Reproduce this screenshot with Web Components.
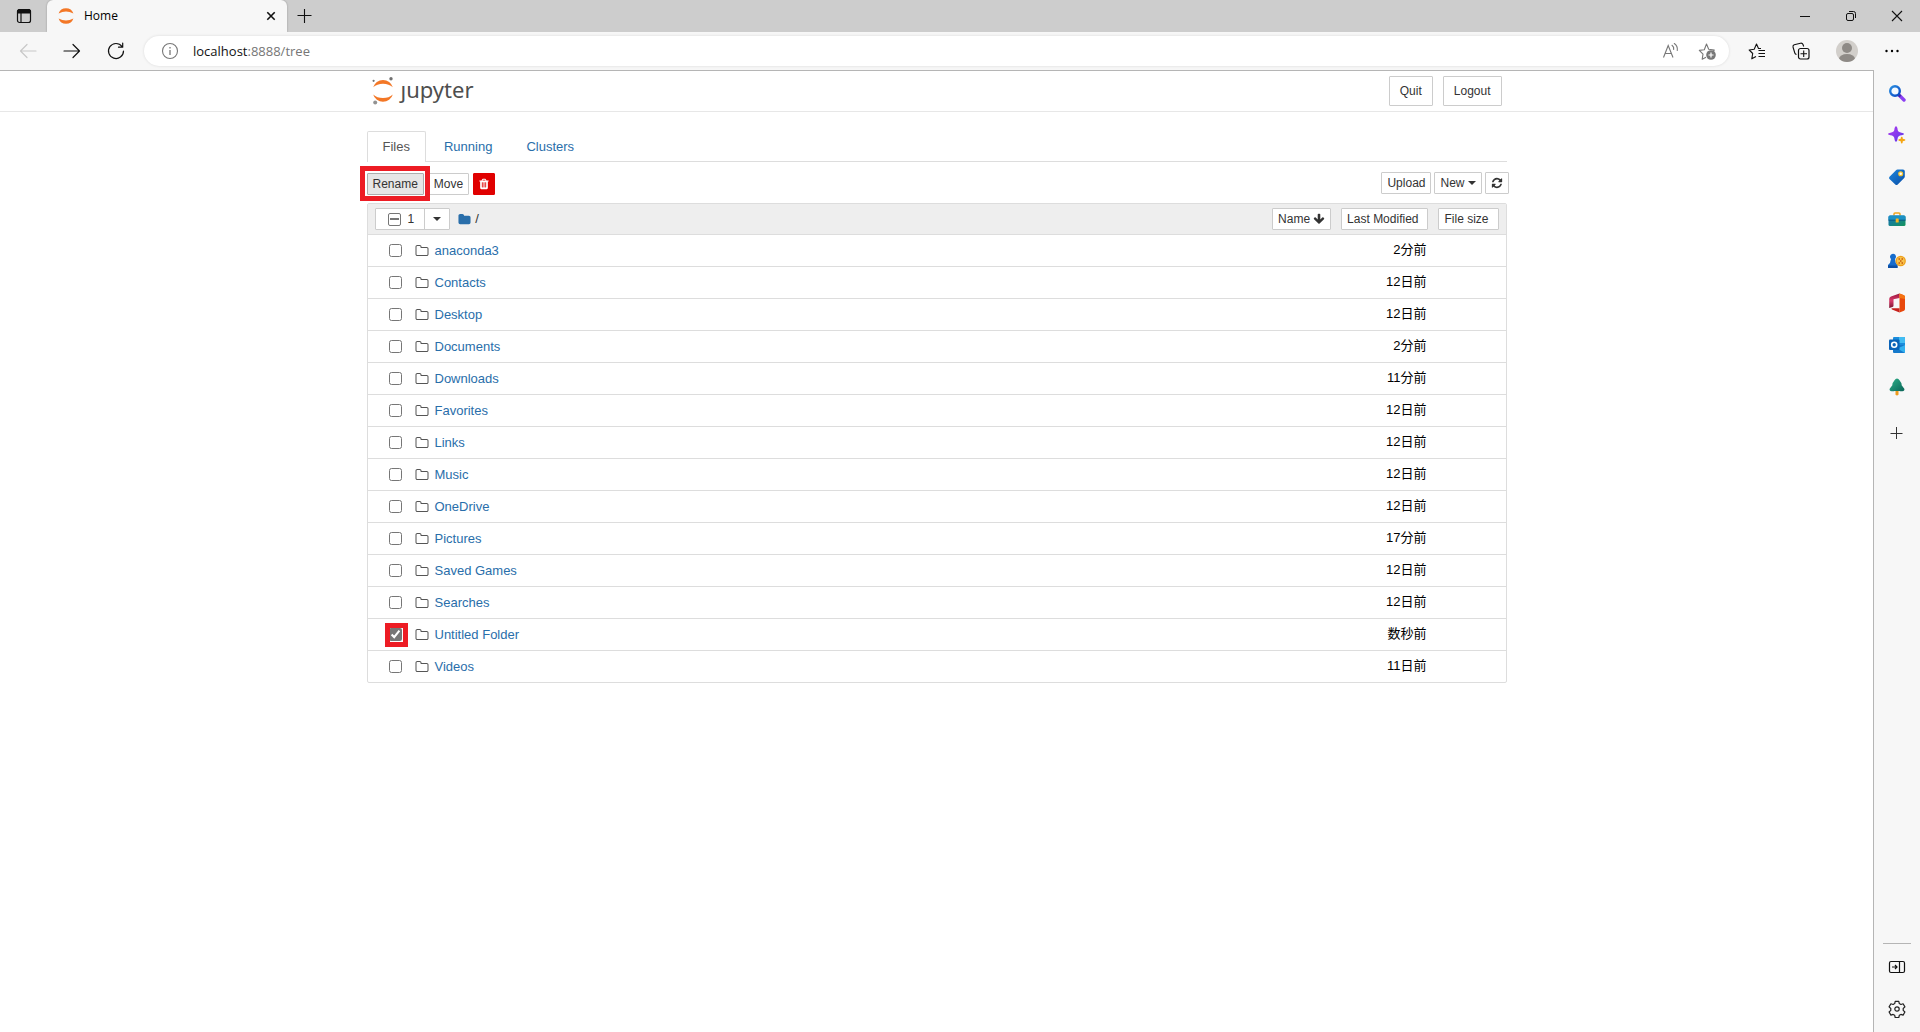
<!DOCTYPE html>
<html lang="ja">
<head>
<meta charset="utf-8">
<title>Home</title>
<style>
html, body { margin: 0; height: 100%; background: #fff; }
body { font-family: "Liberation Sans", "Noto Sans CJK JP", sans-serif; font-size: 13px; line-height: 20px; color: #000; }
</style>
</head>
<body>
<browser-window>
  <tab-strip slot="tabs"></tab-strip>
  <address-bar slot="address"></address-bar>
  <notebook-header></notebook-header>
  <file-browser></file-browser>
  <edge-sidebar slot="side"></edge-sidebar>
</browser-window>

<script>
const S = (w, h, vb, body, extra = '') =>
  `<svg width="${w}" height="${h}" viewBox="${vb}" aria-hidden="true" ${extra}>${body}</svg>`;
const line = 'fill="none" stroke="currentColor" stroke-width="1.2" stroke-linecap="round" stroke-linejoin="round"';

const ICONS = {
  workspaces: S(16, 16, '0 0 16 16', '<rect x="1.5" y="1.5" width="13" height="13" rx="2" fill="none" stroke="#111" stroke-width="1.2"/><path d="M1.5 5V3.3Q1.500 1.500 3.300 1.500H12.700Q14.500 1.500 14.500 3.300V5z" fill="#111" stroke="#111"/><path d="M5 5v9.500" stroke="#111" stroke-width="1.200"/>'),
  planet: S(16, 16, '0 0 16 16', '<path d="M.6 5.500A7.800 7.800 0 0 1 15.400 5.500Q8 1.300 .6 5.500zM.6 10.500A7.800 7.800 0 0 0 15.400 10.500Q8 14.700 .6 10.500z" fill="#f37726"/>'),
  closeTab: S(10, 10, '0 0 10 10', '<path d="M1.300 1.300l7.400 7.400M8.700 1.300l-7.400 7.400" stroke="#111" stroke-width="1.600"/>'),
  plus: S(16, 16, '0 0 16 16', '<path d="M7.500 1v14M.5 7.500h14" stroke="#111" stroke-width="1.100"/>'),
  plusThin: S(14, 14, '0 0 14 14', '<path d="M6.500 1v12M.5 7.500h12" stroke="#333" stroke-width="1"/>'),
  minimize: S(12, 12, '0 0 12 12', '<path d="M1 6.500h10" stroke="#111"/>'),
  restore: S(12, 12, '0 0 12 12', '<rect x="1.500" y="3.500" width="7" height="7" rx="1.500" fill="none" stroke="#111"/><path d="M4 1.500h4.500a2 2 0 0 1 2 2V8" fill="none" stroke="#111"/>'),
  close: S(12, 12, '0 0 12 12', '<path d="M1 1l10 10M11 1L1 11" stroke="#111" stroke-width="1.100"/>'),
  back: S(18, 18, '0 0 18 18', `<path d="M17 9H1.500M8 2.500L1.500 9 8 15.500" ${line}/>`),
  forward: S(18, 18, '0 0 18 18', `<path d="M1 9h15.500M10 2.500L16.500 9 10 15.500" ${line}/>`),
  reload: S(18, 18, '0 0 18 18', `<path d="M15 4.500A7.500 7.500 0 1 0 16.500 9M15.700 1v4.200h-4.200" ${line}/>`),
  info: S(18, 18, '0 0 18 18', '<circle cx="9" cy="9" r="7.500" fill="none" stroke="#777" stroke-width="1.100"/><path d="M9 8v5M9 5v1.400" stroke="#777" stroke-width="1.300"/>'),
  readAloud: S(18, 18, '0 0 18 18', '<path d="M1.500 15.500L6.200 3.500 11 15.500M3 11.500h6.500" fill="none" stroke="#777" stroke-width="1.100"/><path d="M10 3.300q2 1.500 1.700 4.200M12.300 1.500q3.600 2.600 3 7" fill="none" stroke="#777" stroke-width="1.100" stroke-linecap="round"/>'),
  starAdd: S(18, 18, '0 0 18 18', '<path d="M8 15.200l-3.800 2 .8-5L1.300 8.400l5-.7L8.500 2l2.200 5.200 5.600.8-2 2" fill="none" stroke="#777" stroke-width="1.100" stroke-linejoin="round"/><circle cx="13" cy="13" r="4.800" fill="#777"/><path d="M13 10.500v5M10.500 13h5" stroke="#fff" stroke-width="1.200"/>'),
  favorites: S(18, 18, '0 0 18 18', '<path d="M8 14.500l-4.200 2.300.9-5.300L1.200 8l5-.7L8.500 2l2 4.500h2.500" fill="none" stroke="#111" stroke-width="1.100" stroke-linejoin="round"/><path d="M10.500 8.500H17M10.500 11.500H17M10.500 14.500H17" stroke="#111" stroke-width="1.200"/>'),
  collections: S(18, 18, '0 0 18 18', '<rect x="6.500" y="6.500" width="10.500" height="10.500" rx="2" fill="none" stroke="#111" stroke-width="1.200"/><path d="M11.700 8.500v6.500M8.500 11.700H15M4.500 12.500Q3.200 12.300 2.800 11L1 5Q.700 3.300 2.200 2.700L8.500 1.200Q10.400 .900 11 2.500L11.700 4.500" fill="none" stroke="#111" stroke-width="1.100"/>'),
  profile: S(22, 22, '0 0 22 22', '<defs><clipPath id="c"><circle cx="11" cy="11" r="11"/></clipPath></defs><g clip-path="url(#c)"><rect width="22" height="22" fill="#d2cfcb"/><circle cx="11" cy="8" r="5" fill="#8e8a86"/><ellipse cx="11" cy="19" rx="8" ry="5" fill="#8e8a86"/></g>'),
  more: S(16, 16, '0 0 16 16', '<circle cx="2.500" cy="8" r="1.200"/><circle cx="8" cy="8" r="1.200"/><circle cx="13.500" cy="8" r="1.200"/>'),
  search: S(18, 18, '0 0 18 18', '<defs><linearGradient id="g" x2="1" y2="1"><stop stop-color="#2a8ee0"/><stop offset="1" stop-color="#0a47c4"/></linearGradient></defs><path d="M11 11l5 5" stroke="#8b3ff2" stroke-width="3.400" stroke-linecap="round"/><path d="M10.500 10.500l2 2" stroke="#4a2ba8" stroke-width="2.500"/><circle cx="7" cy="7" r="4.800" fill="#f4faff" stroke="url(#g)" stroke-width="2.400"/>'),
  sparkle: S(18, 18, '0 0 18 18', '<defs><linearGradient id="g" x2="1" y2="1"><stop stop-color="#b23cf0"/><stop offset="1" stop-color="#5a38e8"/></linearGradient></defs><path d="M8 .3Q9.300 .3 9.700 4 10 6.200 13.500 6.700 16 7.200 16 8 16 8.800 13.500 9.300 10 9.800 9.700 12 9.300 15.700 8 15.700 6.700 15.700 6.300 12 6 9.800 2.500 9.300 0 8.800 0 8 0 7.200 2.500 6.700 6 6.200 6.300 4 6.700 .3 8 .3z" fill="url(#g)"/><path d="M13.800 10.800q.9-.5 1 2 2.700.2 2.700 1.200t-2.700 1.200q-.1 2.600-1 2.400-1 .2-1.100-2.400Q10.200 15 10.200 14t2.500-1.200q.1-2.500 1.100-2z" fill="#f5a714"/>'),
  tag: S(18, 18, '0 0 18 18', '<defs><linearGradient id="g" x2="1" y2="1"><stop stop-color="#1c86dc"/><stop offset="1" stop-color="#0b4fa8"/></linearGradient></defs><path d="M8 2.200Q8.500 1.500 9.500 1.500H15Q16.800 1.500 16.800 3.300V8.500Q16.800 9.300 16.200 10L9.700 16.500Q8.500 17.500 7.300 16.500L1.500 11Q.500 10 1.500 8.800z" fill="url(#g)"/><circle cx="12.700" cy="5.700" r="1.900" fill="#fff" stroke="#f5c22e" stroke-width="1.300"/>'),
  toolbox: S(18, 18, '0 0 18 18', '<defs><linearGradient id="g" x2="1" y2="1"><stop stop-color="#156fc0"/><stop offset="1" stop-color="#15955a"/></linearGradient></defs><path d="M6 5.500V4q0-1 1-1h4q1 0 1 1v1.500" fill="none" stroke="#efa51f" stroke-width="1.500"/><rect x=".5" y="5.500" width="17" height="10.500" rx="1.500" fill="url(#g)"/><path d="M.5 7Q.500 5.500 2 5.500H16q1.500 0 1.500 1.500V10H.5z" fill="#1b90c4"/><path d="M.5 10.200h17" stroke="#0b5b80"/><rect x="7.700" y="8.500" width="3" height="4" rx=".6" fill="#f6b522"/>'),
  games: S(18, 18, '0 0 18 18', '<path d="M2 4.500a3 3 0 1 1 5 2.500Q7.200 11 9.500 13v3H0v-3Q2.700 11 3 7A3 3 0 0 1 2 4.500z" fill="#176ccc"/><path d="M0 13.500h9.500V16H0z" fill="#0d4ea3"/><circle cx="12.700" cy="9" r="5.200" fill="#efa01b"/><circle cx="12.700" cy="9" r="3.900" fill="#f8c34d"/><path d="M10.500 7h1.500M13.500 7H15M10.500 11h1.500M13.500 11H15M12 9h1.500" stroke="#c85b0a" stroke-width="1.300"/>'),
  office: S(18, 20, '0 0 18 20', '<defs><linearGradient id="g" x2="0" y2="1"><stop stop-color="#9b173e"/><stop offset=".5" stop-color="#d83b6b"/><stop offset="1" stop-color="#7a152e"/></linearGradient></defs><path d="M11.500 .5L3 3.400Q1.200 4 1.200 6v9L4.500 14Q5.500 13.500 5.500 12.500V6.300L11.500 5z" fill="url(#g)"/><path d="M11.500 .5L16 2.200Q17 2.700 17 4V16q0 1.300-1 1.700L11.500 19.500z" fill="#e8480c"/><path d="M11.500 5V.500L16 2.200Q17 2.700 17 4v2z" fill="#f57312"/><path d="M4 15.300h7.500v4.200L4 16.600q-1.200-.8 0-1.300z" fill="#c7201c"/>'),
  outlook: S(18, 18, '0 0 18 18', '<rect x="5" y="1" width="12" height="12" rx="1" fill="#1a8cdc"/><path d="M11 1h5q1 0 1 1v5h-6z" fill="#42bcf2"/><path d="M5 9h12v7q0 1-1 1H6q-1 0-1-1z" fill="#1579cb"/><path d="M17 9v8L9.500 12.500z" fill="#32b1ef"/><rect x="1" y="3.500" width="10.500" height="10.500" rx="1" fill="#0b63b8"/><circle cx="6.200" cy="8.700" r="2.500" fill="none" stroke="#fff" stroke-width="1.600"/>'),
  tree: S(18, 18, '0 0 18 18', '<defs><linearGradient id="g" x2="1" y2="1"><stop stop-color="#2fb18a"/><stop offset="1" stop-color="#0a6457"/></linearGradient></defs><path d="M7.500 11.500h3V16.800q-1.500 1.200-3 0z" fill="#ee9b1d"/><path d="M9 .5Q10.500 .5 11.500 2.300L13.300 5Q14 6.300 13.500 7L16.300 10.800Q17 12.300 15.500 13 13 13.500 11.300 13H6.700Q5 13.500 2.500 13 1 12.300 1.700 10.800L4.500 7Q4 6.300 4.700 5L6.500 2.300Q7.500 .5 9 .5z" fill="url(#g)"/>'),
  panel: S(18, 14, '0 0 18 14', '<rect x="1.500" y="1.500" width="15" height="11" rx="1.500" fill="none" stroke="#111" stroke-width="1.200"/><path d="M11.500 1.500v11M4 7h5M7 5l2 2-2 2" fill="none" stroke="#111" stroke-width="1.200"/>'),
  gear: S(18, 18, '0 0 18 18', '<path d="M7.200 1.300h3.600l.5 2.300 1.600.9 2.200-.7 1.800 3.100-1.700 1.600v1.900l1.700 1.600-1.800 3.100-2.200-.7-1.600.9-.5 2.200H7.200l-.5-2.200-1.600-.9-2.200.7-1.800-3.100 1.700-1.600V8.500L1.100 6.900l1.800-3.100 2.200.7 1.600-.9z" fill="none" stroke="#222" stroke-width="1.200" stroke-linejoin="round"/><circle cx="9" cy="9" r="2.200" fill="none" stroke="#222" stroke-width="1.200"/>'),
  jupyter: S(22, 30, '0 0 22 30', '<path d="M1.200 11.300A10.200 10.200 0 0 1 20.800 11.300Q17 7.800 11 7.800T1.200 11.300zM1.200 18.500A10.200 10.200 0 0 0 20.800 18.500Q17 22 11 22T1.200 18.500z" fill="#f37726"/><circle cx="19" cy="2.800" r="1.700" fill="#717171"/><circle cx="1.600" cy="4.800" r="1.100" fill="#717171"/><circle cx="3.200" cy="26.500" r="2" fill="#929292"/>'),
  trash: S(12, 12, '0 0 1792 1792', '<path fill="currentColor" d="M704 1376v-704q0-14-9-23t-23-9h-64q-14 0-23 9t-9 23v704q0 14 9 23t23 9h64q14 0 23-9t9-23zm256 0v-704q0-14-9-23t-23-9h-64q-14 0-23 9t-9 23v704q0 14 9 23t23 9h64q14 0 23-9t9-23zm256 0v-704q0-14-9-23t-23-9h-64q-14 0-23 9t-9 23v704q0 14 9 23t23 9h64q14 0 23-9t9-23zm-544-992h448l-48-117q-7-9-17-11h-317q-10 2-17 11zm928 32v64q0 14-9 23t-23 9h-96v948q0 83-47 143.500t-113 60.500h-832q-66 0-113-58.500t-47-141.500v-952h-96q-14 0-23-9t-9-23v-64q0-14 9-23t23-9h309l70-167q15-37 54-63t79-26h320q40 0 79 26t54 63l70 167h309q14 0 23 9t9 23z"/>'),
  refresh: S(12, 12, '0 0 1792 1792', '<path fill="currentColor" d="M1639 1056q0 5-1 7-64 268-268 434.500t-478 166.500q-146 0-282.500-55t-243.500-157l-129 129q-19 19-45 19t-45-19-19-45v-448q0-26 19-45t45-19h448q26 0 45 19t19 45-19 45l-137 137q71 66 161 102t187 36q134 0 250-65t186-179q11-17 53-117 8-23 30-23h192q13 0 22.500 9.500t9.500 22.500zm25-800v448q0 26-19 45t-45 19h-448q-26 0-45-19t-19-45 19-45l138-138q-148-137-349-137-134 0-250 65t-186 179q-11 17-53 117-8 23-30 23h-199q-13 0-22.500-9.500t-9.500-22.500v-7q65-268 270-434.500t480-166.500q146 0 284 55.500t245 156.500l130-129q19-19 45-19t45 19 19 45z"/>'),
  arrowDown: S(12, 12, '0 0 1792 1792', '<path fill="currentColor" d="M1675 832q0 53-37 90l-651 652q-39 37-91 37-53 0-90-37l-651-652q-38-36-38-90 0-53 38-91l74-75q39-37 91-37 53 0 90 37l294 294v-704q0-52 38-90t90-38h128q52 0 90 38t38 90v704l294-294q37-37 90-37 52 0 91 37l75 75q37 39 37 91z"/>'),
  folder: S(13, 13, '0 0 1792 1792', '<path fill="currentColor" d="M1728 608v704q0 92-66 158t-158 66h-1216q-92 0-158-66t-66-158v-960q0-92 66-158t158-66h320q92 0 158 66t66 158v32h672q92 0 158 66t66 158z"/>'),
  folderOpen: S(14, 14, '0 0 1792 1792', '<path fill="currentColor" d="M1600 1312v-704q0-40-28-68t-68-28h-704q-40 0-68-28t-28-68v-64q0-40-28-68t-68-28h-320q-40 0-68 28t-28 68v960q0 40 28 68t68 28h1216q40 0 68-28t28-68zm128-704v704q0 92-66 158t-158 66h-1216q-92 0-158-66t-66-158v-960q0-92 66-158t158-66h320q92 0 158 66t66 158v32h672q92 0 158 66t66 158z"/>'),
  caret: S(8, 4, '0 0 8 4', '<path d="M0 0h8L4 4z" fill="currentColor"/>')
};

const BASE = `
  * { box-sizing: border-box; }
  button { display: flex; align-items: center; justify-content: center; font: inherit; color: inherit; background: none; border: 0; padding: 0; margin: 0; }
  svg { display: block; flex: none; }
`;

function define(name, css, html, after) {
  customElements.define(name, class extends HTMLElement {
    connectedCallback() {
      if (this.shadowRoot) return;
      const root = this.attachShadow({ mode: 'open' });
      root.innerHTML = `<style>${BASE}${css}</style>` + (typeof html === 'function' ? html(this) : html);
      if (after) after(root, this);
    }
  });
}

define('ui-icon', ':host { display: inline-flex; flex: none; }', el => ICONS[el.getAttribute('name')]);

define('browser-window', `
  :host { display: flex; flex-direction: column; min-height: 100vh; background: #f7f7f7; }
  .body { flex: 1; display: flex; }
  main { flex: 1; min-width: 0; background: #fff; border-top: 1px solid #b5b5b5; border-right: 1px solid #b5b5b5; }
`, `<slot name="tabs"></slot><slot name="address"></slot>
  <div class="body"><main><slot></slot></main><slot name="side"></slot></div>`);

define('tab-strip', `
  :host { display: flex; height: 32px; background: #cdcdcd; font: 12px/16px "Open Sans", "Noto Sans", sans-serif; }
  .work { width: 47px; }
  .tab { display: flex; align-items: center; width: 240px; padding: 0 11px; gap: 10px; background: #f7f7f7; border-radius: 6px 6px 0 0; box-shadow: 0 0 2px rgba(0,0,0,.3); }
  .tab span { flex: 1; }
  .new { width: 35px; }
  .win { margin-left: auto; display: flex; }
  .win button { width: 46px; }
`, `<button class="work" aria-label="Workspaces"><ui-icon name="workspaces"></ui-icon></button>
  <div class="tab"><ui-icon name="planet"></ui-icon><span>Home</span><button aria-label="Close tab"><ui-icon name="closeTab"></ui-icon></button></div>
  <button class="new" aria-label="New tab"><ui-icon name="plus"></ui-icon></button>
  <div class="win"><button aria-label="Minimize"><ui-icon name="minimize"></ui-icon></button><button aria-label="Restore"><ui-icon name="restore"></ui-icon></button><button aria-label="Close"><ui-icon name="close"></ui-icon></button></div>`);

define('address-bar', `
  :host { display: flex; align-items: center; height: 38px; background: #f7f7f7; position: relative; z-index: 1; }
  .nav { display: flex; gap: 26px; padding: 0 19px; color: #111; }
  .nav .off { color: #c8c8c8; }
  .field { flex: 1; display: flex; align-items: center; height: 30px; margin-right: 8px; padding: 0 13px 0 17px; background: #fff; border-radius: 15px; box-shadow: 0 0 3px rgba(0,0,0,.12); font: 13px/18px "Open Sans", "Noto Sans", sans-serif; color: #767676; }
  .url { flex: 1; margin-left: 14px; }
  .url b { font-weight: 400; color: #111; }
  .field .marks { display: flex; gap: 18px; }
  .tools { display: flex; align-items: center; gap: 26px; padding: 0 20px 0 11px; }
`, `<div class="nav"><button class="off" aria-label="Back"><ui-icon name="back"></ui-icon></button><button aria-label="Forward"><ui-icon name="forward"></ui-icon></button><button aria-label="Refresh"><ui-icon name="reload"></ui-icon></button></div>
  <div class="field"><ui-icon name="info"></ui-icon><div class="url"><b>localhost</b>:8888/tree</div><div class="marks"><button aria-label="Read aloud"><ui-icon name="readAloud"></ui-icon></button><button aria-label="Add favorite"><ui-icon name="starAdd"></ui-icon></button></div></div>
  <div class="tools"><button aria-label="Favorites"><ui-icon name="favorites"></ui-icon></button><button aria-label="Collections"><ui-icon name="collections"></ui-icon></button><button aria-label="Profile"><ui-icon name="profile"></ui-icon></button><button aria-label="Settings and more"><ui-icon name="more"></ui-icon></button></div>`);

define('edge-sidebar', `
  :host { display: flex; flex-direction: column; align-items: center; width: 46px; padding: 2px 0; background: #f7f7f7; }
  button { width: 46px; height: 42px; }
  .add { height: 50px; }
  hr { margin: auto 0 2px; width: 28px; border: 0; border-top: 1px solid #b5b5b5; }
`, ['search', 'sparkle', 'tag', 'toolbox', 'games', 'office', 'outlook', 'tree']
    .map(n => `<button aria-label="${n}"><ui-icon name="${n}"></ui-icon></button>`).join('') +
  `<button class="add" aria-label="Customize"><ui-icon name="plusThin"></ui-icon></button><hr>
  <button aria-label="Hide sidebar"><ui-icon name="panel"></ui-icon></button><button aria-label="Settings"><ui-icon name="gear"></ui-icon></button>`);

define('nb-button', `
  :host { display: inline-flex; position: relative; }
  button { gap: 3px; height: 22px; padding: 0 5px; font-size: 12px; line-height: 18px; color: #333; background: #fff; border: 1px solid #ccc; border-radius: 1px; white-space: nowrap; }
  :host([large]) button { height: 30px; padding: 0 10px; }
  :host([sortable]) button { padding-right: 9px; }
  :host([pressed]) button { background: #e6e6e6; border-color: #adadad; }
  :host([danger]) button { background: #e00000; border-color: #e00000; color: #fff; padding: 0 4px; }
  :host([marked])::after { content: ""; position: absolute; inset: -7px -6px -6px -7px; border: 5px solid #ed1c24; z-index: 1; }
`, el => `<button aria-label="${el.getAttribute('label') || el.textContent.trim()}"><slot></slot></button>`);

define('notebook-header', `
  :host { display: block; border-bottom: 1px solid #e7e7e7; }
  .inner { display: flex; align-items: center; max-width: 1140px; height: 40px; margin: 0 auto; padding: 0 5px; }
  .logo { display: flex; align-items: flex-start; gap: 7px; color: #4e4e4e; font: 22px/26px "Noto Sans", "Open Sans", sans-serif; text-decoration: none; }
  .buttons { margin-left: auto; display: flex; gap: 10px; }
`, `<div class="inner"><a class="logo" href="#" aria-label="jupyter"><ui-icon name="jupyter"></ui-icon><span>ȷupyter</span></a>
  <div class="buttons"><nb-button large>Quit</nb-button><nb-button large>Logout</nb-button></div></div>`);

define('file-row', `
  :host { display: flex; align-items: center; height: 32px; padding: 0 79px 0 21px; border-top: 1px solid #ddd; }
  .check { display: flex; position: relative; width: 13px; height: 13px; margin-right: 13px; }
  :host([checked]) .check::after { content: ""; position: absolute; inset: -5px -6px -6px -4px; border: 5px solid #ed1c24; pointer-events: none; }
  input { width: 13px; height: 13px; margin: 0; accent-color: #767676; }
  ui-icon { color: #555; margin-right: 6px; }
  a { color: #296eaa; text-decoration: none; }
  time { margin-left: auto; padding-bottom: 2px; }
`, el => `<label class="check"><input type="checkbox" aria-label="${el.getAttribute('name')}" ${el.hasAttribute('checked') ? 'checked' : ''}></label>
  <ui-icon name="folderOpen"></ui-icon><a href="#">${el.getAttribute('name')}</a><time>${el.getAttribute('modified')}</time>`);

const FILES = [['anaconda3', '2分前'], ['Contacts', '12日前'], ['Desktop', '12日前'], ['Documents', '2分前'],
  ['Downloads', '11分前'], ['Favorites', '12日前'], ['Links', '12日前'], ['Music', '12日前'], ['OneDrive', '12日前'],
  ['Pictures', '17分前'], ['Saved Games', '12日前'], ['Searches', '12日前'], ['Untitled Folder', '数秒前', true], ['Videos', '11日前']];

define('file-browser', `
  :host { display: block; max-width: 1140px; margin: 0 auto; padding-top: 19px; }
  nav { display: flex; gap: 2px; border-bottom: 1px solid #ddd; }
  nav a { padding: 5px 15px 4px; border: 1px solid transparent; border-bottom: 0; line-height: 20px; color: #296eaa; text-decoration: none; }
  nav a.on { color: #555; background: #fff; border-color: #ddd; border-radius: 2px 2px 0 0; margin-bottom: -1px; padding-bottom: 5px; }
  .bar { display: flex; align-items: flex-start; padding: 10px 0 8px; }
  .left { display: flex; gap: 4px; padding-top: 1px; }
  .right { display: flex; gap: 3px; margin: 0 -2px 0 auto; }
  .list { border: 1px solid #ddd; border-radius: 2px; }
  .head { display: flex; align-items: center; height: 30px; padding: 0 7px; background: #eee; }
  .group { display: flex; height: 22px; background: #fff; border: 1px solid #ccc; border-radius: 1px; font-size: 12px; color: #333; }
  .group label { display: flex; align-items: center; gap: 7px; padding: 0 10px 0 12px; }
  .group button { width: 25px; border-left: 1px solid #ccc; }
  .group input { appearance: none; width: 13px; height: 13px; margin: 0; border: 1px solid #767676; border-radius: 2px; background: linear-gradient(#767676, #767676) center / 9px 2px no-repeat #fff; }
  .crumb { display: flex; align-items: center; gap: 4px; margin-left: 8px; color: #296eaa; text-decoration: none; }
  .crumb span { color: #333; }
  .sort { margin-left: auto; display: flex; gap: 10px; }
`, `<nav><a class="on" href="#">Files</a><a href="#">Running</a><a href="#">Clusters</a></nav>
  <div class="bar">
    <div class="left"><nb-button pressed marked>Rename</nb-button><nb-button>Move</nb-button><nb-button danger label="Delete"><ui-icon name="trash"></ui-icon></nb-button></div>
    <div class="right"><nb-button>Upload</nb-button><nb-button>New <ui-icon name="caret"></ui-icon></nb-button><nb-button label="Refresh"><ui-icon name="refresh"></ui-icon></nb-button></div>
  </div>
  <div class="list">
    <div class="head">
      <div class="group"><label><input type="checkbox">1</label><button aria-label="Select"><ui-icon name="caret"></ui-icon></button></div>
      <a class="crumb" href="#" aria-label="Home folder"><ui-icon name="folder"></ui-icon><span>/</span></a>
      <div class="sort"><nb-button>Name<ui-icon name="arrowDown"></ui-icon></nb-button><nb-button sortable>Last Modified</nb-button><nb-button sortable>File size</nb-button></div>
    </div>
    ${FILES.map(([n, m, c]) => `<file-row name="${n}" modified="${m}" ${c ? 'checked' : ''}></file-row>`).join('')}
  </div>`,
  root => { root.querySelector('.group input').indeterminate = true; });
</script>
</body>
</html>
